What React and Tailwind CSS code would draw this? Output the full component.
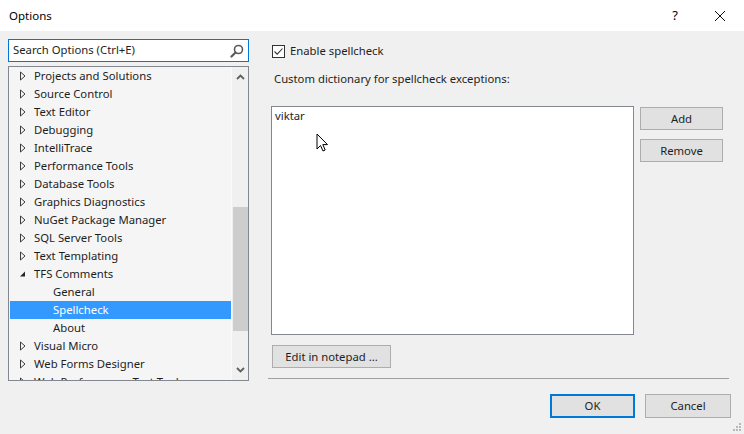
import React from "react";

const font = { fontFamily: '"Noto Sans", "Segoe UI", sans-serif' };

const items = [
  { label: "Projects and Solutions", kind: "closed" },
  { label: "Source Control", kind: "closed" },
  { label: "Text Editor", kind: "closed" },
  { label: "Debugging", kind: "closed" },
  { label: "IntelliTrace", kind: "closed" },
  { label: "Performance Tools", kind: "closed" },
  { label: "Database Tools", kind: "closed" },
  { label: "Graphics Diagnostics", kind: "closed" },
  { label: "NuGet Package Manager", kind: "closed" },
  { label: "SQL Server Tools", kind: "closed" },
  { label: "Text Templating", kind: "closed" },
  { label: "TFS Comments", kind: "open" },
  { label: "General", kind: "child" },
  { label: "Spellcheck", kind: "child", selected: true },
  { label: "About", kind: "child" },
  { label: "Visual Micro", kind: "closed" },
  { label: "Web Forms Designer", kind: "closed" },
  { label: "Web Performance Test Tools", kind: "closed" },
];

function Arrow({ kind }) {
  if (kind === "open") {
    return (
      <svg width="8" height="8" viewBox="0 0 8 8" className="ml-[9px] mr-[7px] shrink-0">
        <path d="M6 1.5 L6 6.5 L1 6.5 Z" fill="#262626" />
      </svg>
    );
  }
  return (
    <svg width="8" height="10" viewBox="0 0 8 10" className="ml-[9px] mr-[7px] shrink-0">
      <path d="M1.5 1 L1.5 9 L6 5 Z" fill="none" stroke="#3c3c3c" strokeWidth="1" />
    </svg>
  );
}

function TreeRow({ item }) {
  const sel = item.selected;
  return (
    <div
      className={`flex h-[18px] items-center text-[11.3px] leading-none ${
        sel ? "bg-[#3399ff] text-white" : "text-[#1e1e1e]"
      }`}
    >
      {item.kind === "child" ? (
        <span className="w-[43px] shrink-0" />
      ) : (
        <Arrow kind={item.kind} />
      )}
      <span className="whitespace-nowrap">{item.label}</span>
    </div>
  );
}

function Button({ children, className = "", primary }) {
  return (
    <div
      className={`flex items-center justify-center bg-[#e1e1e1] text-[11.3px] text-[#1e1e1e] ${
        primary ? "border-2 border-[#0078d7]" : "border border-[#adadad]"
      } ${className}`}
    >
      {children}
    </div>
  );
}

export default function App() {
  return (
    <div style={font} className="relative flex h-[434px] w-[744px] flex-col overflow-hidden bg-[#f0f0f0]">
      {/* title bar */}
      <div className="flex h-[31px] shrink-0 items-center bg-white">
        <span className="ml-[9px] text-[11.5px] text-black">Options</span>
        <span className="ml-auto mr-[36px] text-[13px] text-black">?</span>
        <svg width="12" height="12" viewBox="0 0 12 12" className="mr-[18px]">
          <path d="M1 1 L11 11 M11 1 L1 11" stroke="#111" strokeWidth="1" />
        </svg>
      </div>

      <div className="flex min-h-0 flex-1">
        {/* left column */}
        <div className="ml-[8px] mt-[8px] flex w-[241px] shrink-0 flex-col">
          <div className="flex h-[23px] items-center border border-[#0078d7] bg-white pl-[4px] pr-[4px]">
            <span className="text-[11.3px] text-[#1e1e1e]">Search Options (Ctrl+E)</span>
            <svg width="14" height="14" viewBox="0 0 14 14" className="ml-auto">
              <circle cx="8.5" cy="5.5" r="4" fill="none" stroke="#5a5a5a" strokeWidth="1.6" />
              <path d="M5.5 8.5 L1.5 12.5" stroke="#5a5a5a" strokeWidth="2.2" strokeLinecap="round" />
            </svg>
          </div>
          <div className="mt-[4px] flex h-[315px] border border-[#828790] bg-[#f5f5f5]">
            <div className="min-w-0 flex-1 overflow-hidden pl-[1px]">
              {items.map((it) => (
                <TreeRow key={it.label} item={it} />
              ))}
            </div>
            <div className="relative flex w-[17px] shrink-0 flex-col items-center border-l border-[#fafafa] bg-[#f0f0f0]">
              <svg width="9" height="6" viewBox="0 0 9 6" className="mt-[7px]">
                <path d="M1 5 L4.5 1.5 L8 5" fill="none" stroke="#606060" strokeWidth="1.8" />
              </svg>
              <div className="mt-[127px] h-[124px] w-[15px] bg-[#cdcdcd]" />
              <svg width="9" height="6" viewBox="0 0 9 6" className="mt-auto mb-[7px]">
                <path d="M1 1 L4.5 4.5 L8 1" fill="none" stroke="#606060" strokeWidth="1.8" />
              </svg>
            </div>
          </div>
        </div>

        {/* right column */}
        <div className="ml-[19px] mr-[8px] flex flex-1 flex-col text-[11.3px] leading-[16px] text-[#1e1e1e]">
          <div className="ml-[4px] mt-[12px] flex h-[16px] items-center">
            <div className="flex h-[13px] w-[13px] items-center justify-center border border-[#333] bg-white">
              <svg width="11" height="11" viewBox="0 0 11 11">
                <path d="M1.5 5.5 L4.2 8.2 L9.5 2.5" fill="none" stroke="#333" strokeWidth="1.1" />
              </svg>
            </div>
            <span className="ml-[5px]">Enable spellcheck</span>
          </div>
          <span className="ml-[6px] mt-[12px] h-[16px]">Custom dictionary for spellcheck exceptions:</span>
          <div className="mt-[19px] flex items-start">
            <div className="relative ml-[3px] h-[229px] w-[363px] border border-[#828790] bg-white px-[3px] pt-[1px]">
              <span>viktar</span>
              <svg width="13" height="20" viewBox="0 0 13 20" className="absolute left-[44px] top-[26px]">
                <path d="M1 1 L1 16 L4.5 12.5 L7 18 L9.2 17 L6.8 11.6 L11.5 11.6 Z" fill="white" stroke="black" strokeWidth="1" strokeLinejoin="round" />
              </svg>
            </div>
            <div className="ml-[6px] mt-[1px] flex flex-col gap-[9px]">
              <Button className="h-[23px] w-[83px]">Add</Button>
              <Button className="h-[23px] w-[83px]">Remove</Button>
            </div>
          </div>
          <Button className="ml-[4px] mt-[10px] h-[23px] w-[119px]">Edit in notepad ...</Button>
          <div className="mt-[10px] h-px w-[461px] bg-[#a0a0a0]" />
          <div className="mt-[15px] flex justify-end gap-[10px] pr-[5px]">
            <Button primary className="h-[24px] w-[85px]">OK</Button>
            <Button className="h-[24px] w-[86px]">Cancel</Button>
          </div>
        </div>
      </div>

      {/* resize grip */}
      <svg width="10" height="10" viewBox="0 0 10 10" className="absolute bottom-[2px] right-[2px]">
        <rect x="7" y="1" width="2" height="2" fill="#b8b8b8" />
        <rect x="4" y="4" width="2" height="2" fill="#b8b8b8" />
        <rect x="7" y="4" width="2" height="2" fill="#b8b8b8" />
        <rect x="1" y="7" width="2" height="2" fill="#b8b8b8" />
        <rect x="4" y="7" width="2" height="2" fill="#b8b8b8" />
        <rect x="7" y="7" width="2" height="2" fill="#b8b8b8" />
      </svg>
    </div>
  );
}
